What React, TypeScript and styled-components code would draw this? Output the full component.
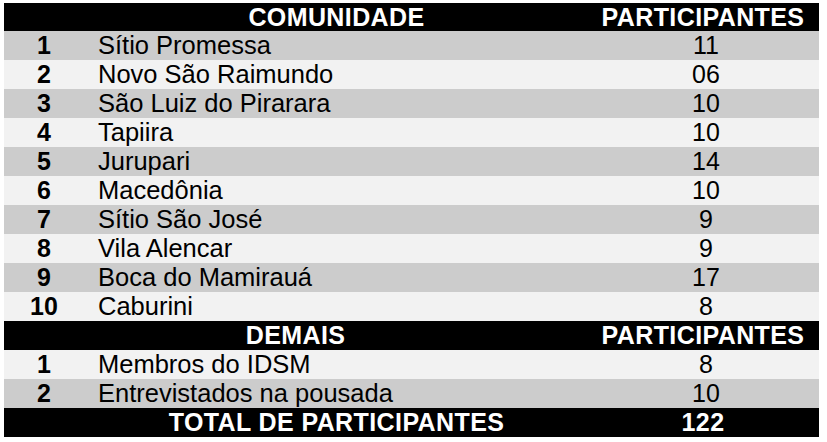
import styled, { createGlobalStyle } from "styled-components";

const GlobalStyle = createGlobalStyle`
  body {
    margin: 0;
    background: #ffffff;
    font-family: "Liberation Sans", Arial, sans-serif;
  }
`;

const Page = styled.div`
  padding: 3px 0 0 4px;
  width: 815px;
`;

const Table = styled.div`
  display: flex;
  flex-direction: column;
`;

type Tone = "dark" | "gray" | "light";

const toneBg: Record<Tone, string> = {
  dark: "#000000",
  gray: "#cccccc",
  light: "#f2f2f2",
};

const Row = styled.div<{ $tone: Tone; $h?: number }>`
  display: grid;
  grid-template-columns: 82px 1fr 222px;
  height: ${(p) => p.$h ?? 29}px;
  align-items: center;
  background: ${(p) => toneBg[p.$tone]};
  color: ${(p) => (p.$tone === "dark" ? "#ffffff" : "#000000")};
`;

const Num = styled.div`
  text-align: center;
  font-weight: 700;
  font-size: 25px;
  padding-right: 2px;
`;

const Name = styled.div`
  font-size: 25.5px;
  padding-left: 12px;
  white-space: nowrap;
`;

const Count = styled.div`
  text-align: center;
  font-size: 25px;
  padding-right: 4px;
`;

const HeadCell = styled.div<{ $span?: number }>`
  grid-column: span ${(p) => p.$span ?? 1};
  text-align: center;
  font-weight: 700;
  font-size: 25px;
  letter-spacing: 0.4px;
  white-space: nowrap;
  padding-right: 10px;
`;

const comunidades: [string, string][] = [
  ["Sítio Promessa", "11"],
  ["Novo São Raimundo", "06"],
  ["São Luiz do Pirarara", "10"],
  ["Tapiira", "10"],
  ["Jurupari", "14"],
  ["Macedônia", "10"],
  ["Sítio São José", "9"],
  ["Vila Alencar", "9"],
  ["Boca do Mamirauá", "17"],
  ["Caburini", "8"],
];

const demais: [string, string][] = [
  ["Membros do IDSM", "8"],
  ["Entrevistados na pousada", "10"],
];

export default function App() {
  return (
    <>
      <GlobalStyle />
      <Page>
        <Table>
          <Row $tone="dark" $h={28}>
            <div />
            <HeadCell>COMUNIDADE</HeadCell>
            <HeadCell>PARTICIPANTES</HeadCell>
          </Row>
          {comunidades.map(([name, n], i) => (
            <Row key={name} $tone={i % 2 === 0 ? "gray" : "light"}>
              <Num>{i + 1}</Num>
              <Name>{name}</Name>
              <Count>{n}</Count>
            </Row>
          ))}
          <Row $tone="dark">
            <HeadCell $span={2}>DEMAIS</HeadCell>
            <HeadCell>PARTICIPANTES</HeadCell>
          </Row>
          {demais.map(([name, n], i) => (
            <Row key={name} $tone={i % 2 === 0 ? "light" : "gray"}>
              <Num>{i + 1}</Num>
              <Name>{name}</Name>
              <Count>{n}</Count>
            </Row>
          ))}
          <Row $tone="dark">
            <div />
            <HeadCell>TOTAL DE PARTICIPANTES</HeadCell>
            <HeadCell>122</HeadCell>
          </Row>
        </Table>
      </Page>
    </>
  );
}
